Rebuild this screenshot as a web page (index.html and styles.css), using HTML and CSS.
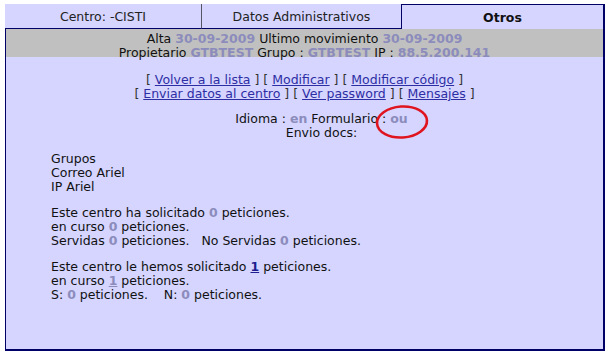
FILE: index.html
```html
<!DOCTYPE html>
<html>
<head>
<meta charset="utf-8">
<link rel="stylesheet" href="styles.css">
</head>
<body>
<div class="wrap">
  <div class="tabs">
    <div class="tab tab-first">Centro: -CISTI</div>
    <div class="tab tab-second">Datos Administrativos</div>
    <div class="tab tab-active">Otros</div>
  </div>
  <div class="panel">
    <div class="header">
      <div>Alta <b class="val">30-09-2009</b> Ultimo movimiento <b class="val">30-09-2009</b></div>
      <div>Propietario <b class="val">GTBTEST</b> Grupo : <b class="val">GTBTEST</b> IP : <b class="val">88.5.200.141</b></div>
    </div>
    <div class="links">
      <div><span class="br">[</span> <a href="#">Volver a la lista</a> <span class="br">] [</span> <a href="#">Modificar</a> <span class="br">] [</span> <a href="#">Modificar código</a> <span class="br">]</span></div>
      <div><span class="br">[</span> <a href="#">Enviar datos al centro</a> <span class="br">] [</span> <a href="#">Ver password</a> <span class="br">] [</span> <a href="#">Mensajes</a> <span class="br">]</span></div>
    </div>
    <div class="lang">
      <div>Idioma : <b class="val">en</b> Formulario : <b class="val">ou</b></div>
      <div>Envio docs:</div>
    </div>
    <div class="block">
      <div>Grupos</div>
      <div>Correo Ariel</div>
      <div>IP Ariel</div>
    </div>
    <div class="block">
      <div>Este centro ha solicitado <b class="val">0</b> peticiones.</div>
      <div>en curso <b class="val">0</b> peticiones.</div>
      <div>Servidas <b class="val">0</b> peticiones.&nbsp;&nbsp; No Servidas <b class="val">0</b> peticiones.</div>
    </div>
    <div class="block block-last">
      <div>Este centro le hemos solicitado <a href="#" class="num">1</a> peticiones.</div>
      <div>en curso <a href="#" class="num num-visited">1</a> peticiones.</div>
      <div>S: <b class="val">0</b> peticiones.&nbsp;&nbsp;&nbsp; N: <b class="val">0</b> peticiones.</div>
    </div>
  </div>
</div>
<svg class="mark" width="60" height="40" viewBox="0 0 60 40">
  <ellipse cx="30" cy="20" rx="25" ry="15.5" fill="none" stroke="#e0141e" stroke-width="2.6" transform="rotate(-4 30 20)"/>
</svg>
</body>
</html>
```
FILE: styles.css
```css
html, body {
  margin: 0;
  padding: 0;
  background: #ffffff;
}
body {
  font-family: "DejaVu Sans", Verdana, sans-serif;
  font-size: 12.5px;
  line-height: 14px;
  color: #111111;
  position: relative;
}
.wrap {
  padding: 4px 0 0 5px;
  width: 600px;
}
.tabs {
  display: flex;
  height: 25px;
}
.tab {
  display: flex;
  align-items: center;
  justify-content: center;
  background: #d5d5ff;
  color: #222222;
  box-sizing: border-box;
  padding-top: 1px;
}
.tab-first {
  width: 197px;
  border-bottom: 1px solid #000066;
  border-right: 1px solid #555566;
}
.tab-second {
  width: 199px;
  border-bottom: 1px solid #000066;
}
.tab-active {
  width: 204px;
  border: 1px solid #000066;
  border-bottom: none;
  border-right-width: 2px;
  font-weight: bold;
  color: #111111;
}
.panel {
  background: #d5d5ff;
  border-left: 1px solid #000066;
  border-right: 2px solid #000066;
  border-bottom: 2px solid #000066;
  height: 322px;
  box-sizing: border-box;
}
.header {
  background: #c0c0c0;
  text-align: center;
  padding: 3px 0 0;
  height: 28px;
  box-sizing: border-box;
}
.val {
  color: #8c8cbc;
  font-weight: bold;
}
.links {
  margin-top: 16px;
  text-align: center;
}
.links a {
  color: #2e2ea4;
  text-decoration: underline;
}
.br {
  color: #333333;
}
.lang {
  margin-top: 11px;
  padding-left: 34px;
  text-align: center;
}
.block {
  margin-top: 12px;
  padding-left: 45px;
}
.block-last {
  margin-top: 12px;
}
.num {
  color: #1e1e90;
  font-weight: bold;
  text-decoration: underline;
}
.num-visited {
  color: #8c8cbc;
}
.mark {
  position: absolute;
  left: 372px;
  top: 102px;
}
```
